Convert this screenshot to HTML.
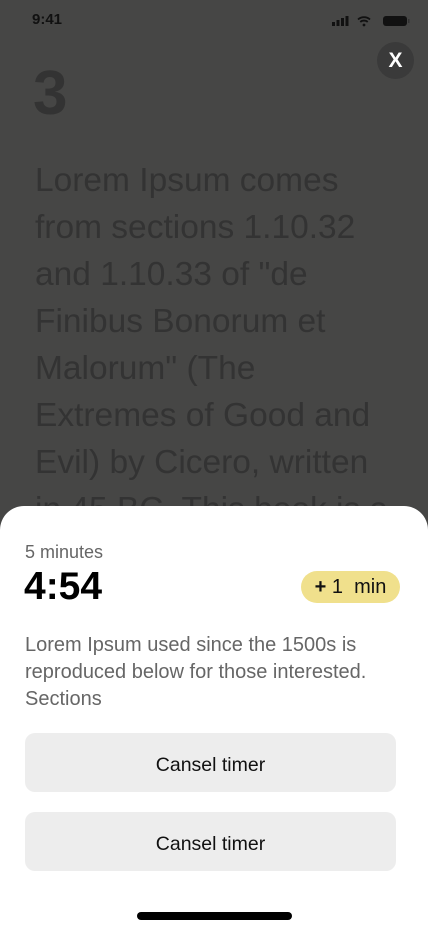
<!DOCTYPE html>
<html><head><meta charset="utf-8"><style>
*{margin:0;padding:0;box-sizing:border-box}
body{width:428px;height:926px;overflow:hidden;background:#464645;font-family:"Liberation Sans",sans-serif;position:relative}
.t{position:absolute;left:35px;color:#333;font-size:33.5px;white-space:nowrap}
.big{position:absolute;left:33px;top:58px;font-size:62px;font-weight:bold;color:#333}
.time{position:absolute;left:32px;top:11px;font-size:15px;font-weight:bold;color:#111}
.x{position:absolute;left:377px;top:42px;width:37px;height:37px;border-radius:50%;background:#3a3a3a;color:#fff;font-size:21px;font-weight:bold;text-align:center;line-height:37px}
.sheet{position:absolute;left:0;top:506px;width:428px;height:420px;background:#fff;border-radius:24px 24px 0 0}
.a{position:absolute}
.btn{position:absolute;left:25px;width:371px;height:59px;background:#ededed;border-radius:10px;text-align:center;line-height:64px;font-size:19.5px;color:#111}
</style></head><body>
<div class="time">9:41</div>
<svg class="a" style="left:332px;top:15px" width="80" height="12" viewBox="0 0 80 12">
<rect x="0" y="7" width="3" height="4" fill="#111"/><rect x="4.5" y="5" width="3" height="6" fill="#111"/><rect x="9" y="3" width="3" height="8" fill="#111"/><rect x="13.5" y="1" width="3" height="10" fill="#111"/>
<path d="M26 4.5a9 9 0 0 1 12 0M28.3 7a5.5 5.5 0 0 1 7.4 0" stroke="#111" stroke-width="1.8" fill="none"/><circle cx="32" cy="10" r="1.4" fill="#111"/>
<rect x="51" y="1" width="24" height="10" rx="3" fill="#111"/><rect x="76" y="4" width="1.5" height="4" fill="#333"/>
</svg>
<div class="x">X</div>
<div class="big">3</div>
<div class="t" style="top:162px">Lorem Ipsum comes</div>
<div class="t" style="top:209px">from sections 1.10.32</div>
<div class="t" style="top:256px">and 1.10.33 of "de</div>
<div class="t" style="top:303px">Finibus Bonorum et</div>
<div class="t" style="top:350px">Malorum" (The</div>
<div class="t" style="top:397px">Extremes of Good and</div>
<div class="t" style="top:444px">Evil) by Cicero, written</div>
<div class="t" style="top:491px">in 45 BC. This book is a</div>
<div class="sheet">
<div class="a" style="left:25px;top:36px;font-size:18px;color:#666">5 minutes</div>
<div class="a" style="left:24px;top:59px;font-size:39px;font-weight:bold;color:#000">4:54</div>
<div class="a" style="left:301px;top:65px;width:99px;height:32px;border-radius:16px;background:#f0e08c;font-size:20px;line-height:32px;text-align:center;color:#111"><b>+</b> 1&nbsp; min</div>
<div class="a" style="left:25px;top:126px;font-size:20px;line-height:27px;color:#666;width:400px">Lorem Ipsum used since the 1500s is<br>reproduced below for those interested.<br>Sections</div>
<div class="btn" style="top:227px">Cansel timer</div>
<div class="btn" style="top:306px">Cansel timer</div>
<div class="a" style="left:137px;top:406px;width:155px;height:8px;border-radius:4px;background:#000"></div>
</div>
</body></html>
